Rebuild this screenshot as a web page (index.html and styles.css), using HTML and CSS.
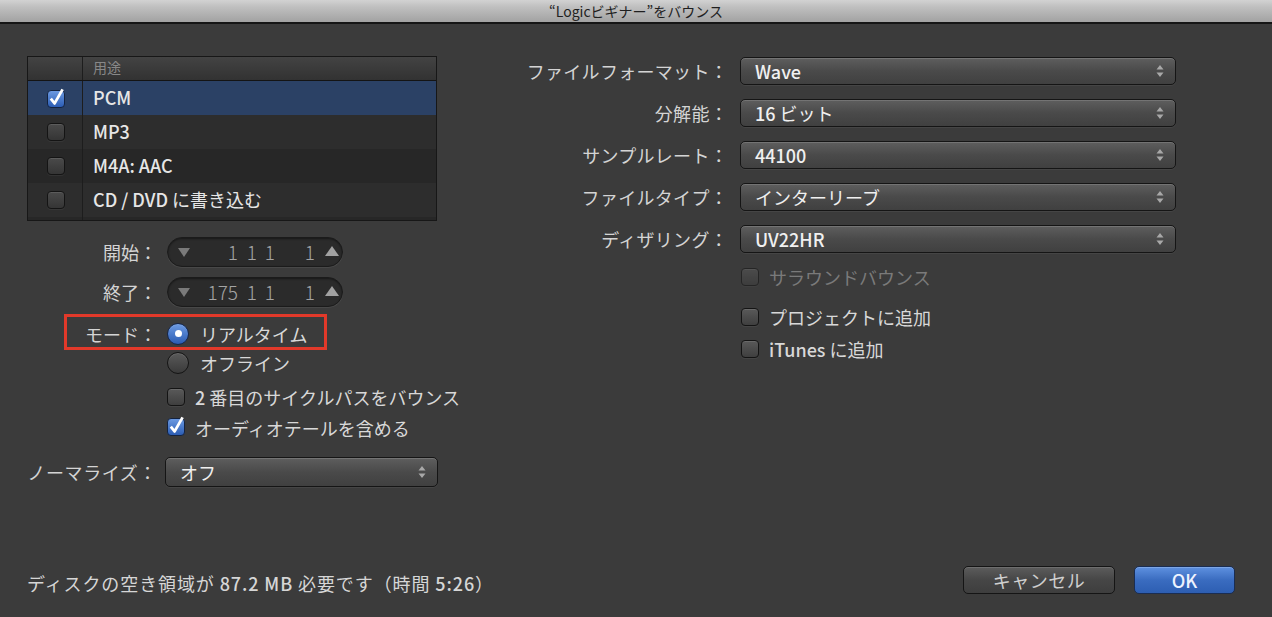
FILE: index.html
```html
<!DOCTYPE html>
<html lang="ja">
<head>
<meta charset="utf-8">
<title>バウンス</title>
<link rel="stylesheet" href="styles.css">
</head>
<body>
<div class="window">
  <div class="titlebar">“Logicビギナー”をバウンス</div>
  <div class="main">
    <div class="left">
      <div class="table">
        <div class="thead"><div class="c1"></div><div class="c2">用途</div></div>
        <div class="trow sel">
          <div class="c1"><svg class="chk" width="22" height="22" viewBox="0 0 22 22"><defs><linearGradient id="bg1" x1="0" y1="0" x2="0" y2="1"><stop offset="0" stop-color="#6d9be3"/><stop offset="1" stop-color="#2a5bb2"/></linearGradient></defs><rect x="2.5" y="3.5" width="17" height="17" rx="3.5" fill="url(#bg1)" stroke="#14233f"/><path d="M5.8 11.6 L9.6 16.4 L17.6 2.4" fill="none" stroke="#fff" stroke-width="2.8" stroke-linejoin="round"/></svg></div>
          <div class="c2"><span class="lat">PCM</span></div>
        </div>
        <div class="trow alt"><div class="c1"><span class="cb dark"></span></div><div class="c2"><span class="lat">MP3</span></div></div>
        <div class="trow"><div class="c1"><span class="cb dark"></span></div><div class="c2"><span class="lat">M4A: AAC</span></div></div>
        <div class="trow alt"><div class="c1"><span class="cb dark"></span></div><div class="c2"><span class="lat">CD / DVD</span>&nbsp;に書き込む</div></div>
        <div class="filler"><div class="c1"></div></div>
      </div>

      <div class="frow spin-row first">
        <div class="lbl">開始：</div>
        <div class="spin">
          <svg class="tri-d" width="12" height="9" viewBox="0 0 12 9"><path d="M0 0 H12 L6 9 Z" fill="#7a7a7a"/></svg>
          <span class="seg s1">1</span><span class="seg s2">1</span><span class="seg s3">1</span><span class="seg s4">1</span>
          <svg class="tri-u" width="14" height="10" viewBox="0 0 14 10"><path d="M7 0 L14 10 H0 Z" fill="#a2a2a2"/></svg>
        </div>
      </div>
      <div class="frow spin-row second">
        <div class="lbl">終了：</div>
        <div class="spin">
          <svg class="tri-d" width="12" height="9" viewBox="0 0 12 9"><path d="M0 0 H12 L6 9 Z" fill="#7a7a7a"/></svg>
          <span class="seg s1">175</span><span class="seg s2">1</span><span class="seg s3">1</span><span class="seg s4">1</span>
          <svg class="tri-u" width="14" height="10" viewBox="0 0 14 10"><path d="M7 0 L14 10 H0 Z" fill="#a2a2a2"/></svg>
        </div>
      </div>

      <div class="frow opt mode">
        <div class="hl"></div>
        <div class="lbl">モード：</div>
        <span class="radio on"><span class="dot"></span></span>
        <span class="otext">リアルタイム</span>
      </div>
      <div class="frow opt">
        <div class="lbl"></div>
        <span class="radio"></span>
        <span class="otext">オフライン</span>
      </div>
      <div class="frow opt cyc">
        <div class="lbl"></div>
        <span class="cb"></span>
        <span class="ctext"><span class="lat">2</span> 番目のサイクルパスをバウンス</span>
      </div>
      <div class="frow opt tail">
        <div class="lbl"></div>
        <svg class="chk" width="22" height="22" viewBox="0 0 22 22"><defs><linearGradient id="bg2" x1="0" y1="0" x2="0" y2="1"><stop offset="0" stop-color="#6d9be3"/><stop offset="1" stop-color="#2a5bb2"/></linearGradient></defs><rect x="2.5" y="3.5" width="17" height="17" rx="3.5" fill="url(#bg2)" stroke="#14233f"/><path d="M5.8 11.6 L9.6 16.4 L17.6 2.4" fill="none" stroke="#fff" stroke-width="2.8" stroke-linejoin="round"/></svg>
        <span class="ctext">オーディオテールを含める</span>
      </div>
      <div class="frow norm">
        <div class="lbl wide">ノーマライズ：</div>
        <div class="popup short"><span>オフ</span><svg class="arr" width="8" height="16" viewBox="0 0 8 16"><path d="M4 2 L7.5 6.5 H0.5 Z M0.5 9.5 H7.5 L4 14 Z" fill="#a8a8a8"/></svg></div>
      </div>
    </div>

    <div class="right">
      <div class="rlbl">ファイルフォーマット：</div>
      <div class="popup"><span class="lat">Wave</span><svg class="arr" width="8" height="16" viewBox="0 0 8 16"><path d="M4 2 L7.5 6.5 H0.5 Z M0.5 9.5 H7.5 L4 14 Z" fill="#a8a8a8"/></svg></div>
      <div class="rlbl">分解能：</div>
      <div class="popup"><span><span class="lat">16</span> ビット</span><svg class="arr" width="8" height="16" viewBox="0 0 8 16"><path d="M4 2 L7.5 6.5 H0.5 Z M0.5 9.5 H7.5 L4 14 Z" fill="#a8a8a8"/></svg></div>
      <div class="rlbl">サンプルレート：</div>
      <div class="popup"><span class="lat">44100</span><svg class="arr" width="8" height="16" viewBox="0 0 8 16"><path d="M4 2 L7.5 6.5 H0.5 Z M0.5 9.5 H7.5 L4 14 Z" fill="#a8a8a8"/></svg></div>
      <div class="rlbl">ファイルタイプ：</div>
      <div class="popup"><span>インターリーブ</span><svg class="arr" width="8" height="16" viewBox="0 0 8 16"><path d="M4 2 L7.5 6.5 H0.5 Z M0.5 9.5 H7.5 L4 14 Z" fill="#a8a8a8"/></svg></div>
      <div class="rlbl">ディザリング：</div>
      <div class="popup"><span class="lat">UV22HR</span><svg class="arr" width="8" height="16" viewBox="0 0 8 16"><path d="M4 2 L7.5 6.5 H0.5 Z M0.5 9.5 H7.5 L4 14 Z" fill="#a8a8a8"/></svg></div>
      <div class="checks">
        <div class="crow disabled"><span class="cb"></span><span class="ctext">サラウンドバウンス</span></div>
        <div class="crow proj"><span class="cb"></span><span class="ctext">プロジェクトに追加</span></div>
        <div class="crow itunes"><span class="cb"></span><span class="ctext"><span class="lat">iTunes</span> に追加</span></div>
      </div>
    </div>
  </div>

  <div class="footer">
    <div class="status">ディスクの空き領域が <span class="lat">87.2 MB</span> 必要です（時間 <span class="lat">5:26</span>）</div>
    <div class="btn cancel">キャンセル</div>
    <div class="btn ok"><span class="lat">OK</span></div>
  </div>
</div>
</body>
</html>
```
FILE: styles.css
```css
* { box-sizing: border-box; }
html, body { margin: 0; padding: 0; }
body {
  width: 1272px;
  height: 617px;
  overflow: hidden;
  background: #3b3b3b;
  font-family: "Noto Sans CJK JP", "Liberation Sans", sans-serif;
  font-size: 18px;
  color: #d6d6d6;
}
.window { height: 617px; display: flex; flex-direction: column; }

.titlebar {
  flex: none;
  height: 24px;
  background: linear-gradient(#d2d2d2, #c0c0c0 30%, #a2a2a2);
  border-bottom: 2px solid #151515;
  display: flex;
  align-items: center;
  justify-content: center;
  font-size: 14px;
  line-height: 22px;
  color: #1f1f1f;
}

.main { flex: 1; display: flex; padding: 32px 0 0 22px; }
.left { width: 478px; flex: none; display: flex; flex-direction: column; }

.lat { font-weight: 500; }

/* table */
.table {
  margin-left: 5px;
  width: 410px;
  border: 1px solid #171717;
  background: #272727;
}
.thead {
  height: 24px;
  display: flex;
  background: linear-gradient(#434343, #323232);
  border-bottom: 1px solid #141414;
}
.c1 {
  width: 55px;
  flex: none;
  border-right: 1px solid #1d1d1d;
  display: flex;
  align-items: center;
  justify-content: center;
}
.c2 { flex: 1; padding-left: 10px; display: flex; align-items: center; line-height: 1; }
.thead .c2 { font-size: 14px; color: #888; padding-bottom: 3px; }
.trow { height: 34px; display: flex; color: #e6e6e6; }
.trow .c2 { padding-bottom: 2px; }
.trow.alt { background: #2d2d2d; }
.trow.sel { background: #2b4165; }
.trow .c1 { padding-left: 2px; }
.filler { height: 3px; display: flex; }

/* checkbox */
.cb {
  display: inline-block;
  flex: none;
  width: 18px;
  height: 18px;
  border: 1px solid #141414;
  border-radius: 4px;
  background: linear-gradient(#595959, #3f3f3f);
  box-shadow: inset 0 1px 0 rgba(255,255,255,0.1), 0 1px 0 rgba(255,255,255,0.05);
}
.cb.dark { background: linear-gradient(#4a4a4a, #353535); }
.chk { display: block; flex: none; }

/* form rows */
.frow { display: flex; align-items: center; }
.lbl { width: 135px; flex: none; margin-right: 10px; text-align: right; line-height: 1; color: #d4d4d4; }
.spin-row { height: 30px; }
.spin-row.first { margin-top: 16px; }
.spin-row.second { margin-top: 10px; }

.spin {
  width: 176px;
  height: 30px;
  border-radius: 15px;
  background: #2b2b2b;
  border: 1px solid #1b1b1b;
  box-shadow: inset 0 1px 2px rgba(0,0,0,0.45), 0 1px 0 rgba(255,255,255,0.07);
  display: flex;
  align-items: center;
  padding-left: 10px;
  font-size: 19px;
  font-weight: 300;
  color: #a4a4a4;
  line-height: 1;
}
.tri-d { flex: none; display: block; }
.seg { flex: none; text-align: right; padding-bottom: 1px; }
.s1 { width: 48px; }
.s2 { width: 19px; }
.s3 { width: 18px; }
.s4 { width: 40px; }
.tri-u { flex: none; display: block; margin-left: 10px; margin-top: -2px; }

.opt { height: 29px; }
.mode { position: relative; margin-top: 12px; }
.hl {
  position: absolute;
  left: 42px;
  top: -5px;
  width: 263px;
  height: 36px;
  border: 3px solid #e2392a;
}
.radio {
  flex: none;
  width: 22px;
  height: 22px;
  border-radius: 50%;
  border: 1px solid #141414;
  background: linear-gradient(#5a5a5a, #3a3a3a);
  box-shadow: inset 0 1px 0 rgba(255,255,255,0.1);
  display: flex;
  align-items: center;
  justify-content: center;
}
.radio.on {
  background: linear-gradient(#6d9be3, #2a5bb2);
  border-color: #15264a;
}
.dot { width: 7px; height: 7px; border-radius: 50%; background: #fff; }
.otext { margin-left: 11px; line-height: 1; color: #d8d8d8; }
.ctext { margin-left: 10px; line-height: 1; color: #d8d8d8; }
.cyc { height: 28px; margin-top: 6px; }
.tail { height: 28px; margin-top: 3px; }
.tail .chk { margin-left: -2px; margin-top: -4px; }
.tail .ctext { margin-left: 8px; }
.norm { height: 30px; margin-top: 15px; }
.lbl.wide { margin-right: 8px; letter-spacing: 0.6px; }

/* popups */
.popup {
  height: 28px;
  border: 1px solid #151515;
  border-radius: 5px;
  background: linear-gradient(#5e5e5e, #4a4a4a 50%, #404040);
  box-shadow: inset 0 1px 0 rgba(255,255,255,0.14), 0 1px 0 rgba(255,255,255,0.05);
  display: flex;
  align-items: center;
  padding: 0 11px 0 14px;
  color: #f0f0f0;
  line-height: 1;
}
.popup .arr { margin-left: auto; flex: none; display: block; }
.popup.short { width: 273px; height: 30px; }

.right {
  width: 676px;
  flex: none;
  padding-top: 1px;
  display: grid;
  grid-template-columns: 228px 436px;
  column-gap: 12px;
  row-gap: 14px;
  align-content: start;
}
.rlbl { text-align: right; line-height: 28px; color: #d4d4d4; letter-spacing: 0.3px; }
.checks { grid-column: 2; display: flex; flex-direction: column; margin-top: -3px; padding-left: 1px; }
.crow { height: 26px; display: flex; align-items: center; }
.crow.disabled .cb { opacity: 0.55; }
.crow.disabled .ctext { color: #7a7a7a; }
.crow.proj { margin-top: 14px; }
.crow.itunes { margin-top: 6px; }

/* footer */
.footer {
  flex: none;
  display: flex;
  align-items: flex-end;
  padding: 0 37px 23px 27px;
}
.status { margin-bottom: -3px; line-height: 28px; color: #d6d6d6; margin-right: auto; letter-spacing: 0.9px; }
.btn {
  height: 28px;
  border-radius: 5px;
  border: 1px solid #151515;
  display: flex;
  align-items: center;
  justify-content: center;
  line-height: 1;
}
.cancel {
  width: 152px;
  background: linear-gradient(#5c5c5c, #464646 50%, #3e3e3e);
  box-shadow: inset 0 1px 0 rgba(255,255,255,0.12);
  color: #cfcfcf;
  letter-spacing: 0.5px;
}
.ok {
  width: 101px;
  margin-left: 19px;
  background: linear-gradient(#5e91e0, #3a6cc0 50%, #2d5eb2);
  border-color: #1a2d52;
  box-shadow: inset 0 1px 0 rgba(255,255,255,0.2);
  color: #eef3ff;
}
```
